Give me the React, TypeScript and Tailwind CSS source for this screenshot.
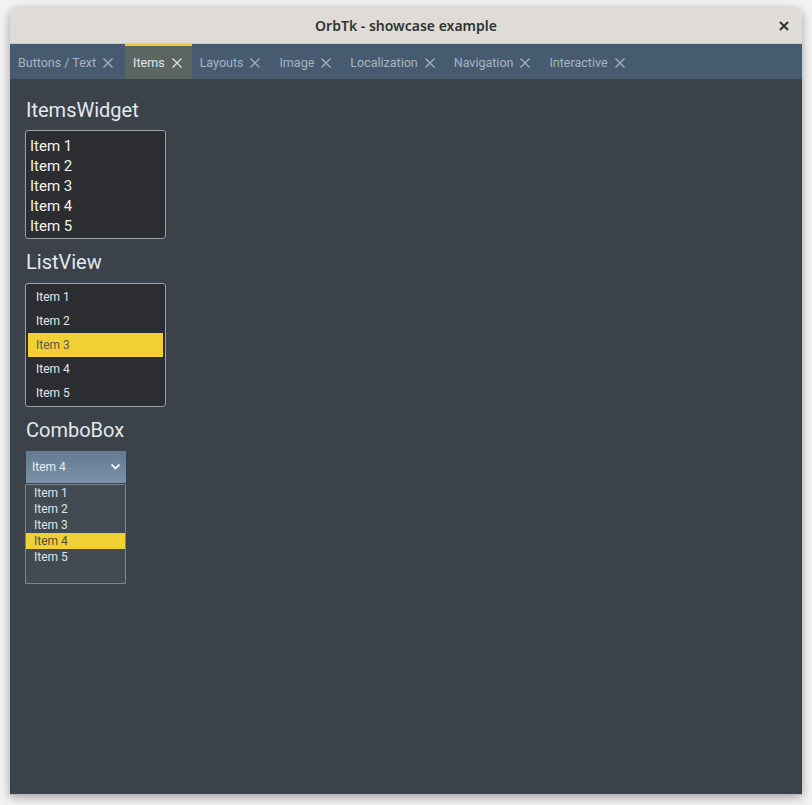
import React from "react";

const tabs = ["Buttons / Text", "Items", "Layouts", "Image", "Localization", "Navigation", "Interactive"];

function XIcon() {
  return (
    <svg width="10" height="10" viewBox="0 0 10 10">
      <path d="M0.5 0.5 L9.5 9.5 M9.5 0.5 L0.5 9.5" stroke="currentColor" strokeWidth="1.2" fill="none" />
    </svg>
  );
}

export default function App() {
  const items = ["Item 1", "Item 2", "Item 3", "Item 4", "Item 5"];
  return (
    <div
      className="w-[812px] h-[805px] bg-[#f2f2f2] pt-[8px] px-[10px] pb-[10px]"
      style={{ fontFamily: "Roboto, 'Noto Sans', sans-serif" }}
    >
      <div className="w-[792px] h-[787px] flex flex-col rounded-t-[8px] shadow-[0_2px_10px_rgba(0,0,0,0.35)] border-b border-[#b8b8b8]">
        {/* Title bar */}
        <div className="h-[36px] bg-[#dfdcd8] rounded-t-[8px] relative flex items-center justify-center border-b border-[#cbc7c2]">
          <span
            className="text-[14px] font-semibold text-[#2e3436]"
            style={{ fontFamily: "'Noto Sans', 'Open Sans', sans-serif" }}
          >
            OrbTk - showcase example
          </span>
          <span className="absolute right-[13px] top-[13px] text-[#2e3436]">
            <svg width="10" height="10" viewBox="0 0 10 10">
              <path d="M1 1 L9 9 M9 1 L1 9" stroke="currentColor" strokeWidth="2" fill="none" />
            </svg>
          </span>
        </div>
        {/* Tab bar */}
        <div className="h-[35px] bg-[#465b6f] flex">
          {tabs.map((t, idx) => {
            const active = t === "Items";
            return (
              <div
                key={t}
                className={
                  active
                    ? "h-full flex items-center pl-[8px] pr-[10px] gap-[7px] bg-[#5b6662] border-t-2 border-[#f0c92f] text-[#e1e6ea] text-[12.5px] pt-[1px]"
                    : idx === 0
                    ? "h-full flex items-center pl-[8px] pr-[12px] gap-[7px] text-[#a7b4c1] text-[12.5px] pt-[3px]"
                    : "h-full flex items-center pl-[8px] pr-[11px] gap-[7px] text-[#a7b4c1] text-[12.5px] pt-[3px]"
                }
              >
                <span>{t}</span>
                <XIcon />
              </div>
            );
          })}
        </div>
        {/* Content */}
        <div className="flex-1 bg-[#3b424a] pl-[15px] pt-[19px] flex flex-col items-start">
          <div className="ml-[1px] text-[20px] leading-[24px] text-[#e3e8ed]">ItemsWidget</div>
          <div className="mt-[8px] w-[141px] h-[109px] bg-[#2c2d30] border border-[#9aa2aa] rounded-[3px] pl-[4px] pt-[5px] flex flex-col">
            {items.map((i) => (
              <div key={i} className="text-[15px] leading-[20px] text-[#f2f4f6]">
                {i}
              </div>
            ))}
          </div>

          <div className="ml-[1px] mt-[11px] text-[20px] leading-[24px] text-[#e3e8ed]">ListView</div>
          <div className="mt-[9px] w-[141px] h-[124px] bg-[#2c2d30] border border-[#9aa2aa] rounded-[3px] px-[2px] pt-[1px] flex flex-col">
            {items.map((i) => (
              <div
                key={i}
                className={
                  i === "Item 3"
                    ? "h-[24px] flex items-center pl-[8px] text-[12px] bg-[#f0d034] text-[#5a5a4a]"
                    : "h-[24px] flex items-center pl-[8px] text-[12px] text-[#e2e6ea]"
                }
              >
                {i}
              </div>
            ))}
          </div>

          <div className="ml-[1px] mt-[11px] text-[20px] leading-[24px] text-[#e3e8ed]">ComboBox</div>
          <div className="mt-[9px] ml-[1px] w-[100px] h-[32px] bg-gradient-to-b from-[#637a90] to-[#7a92a7] flex items-center justify-between pl-[6px] pr-[5px] text-[12px] text-[#e7ecf0]">
            <span>Item 4</span>
            <svg width="11" height="8" viewBox="0 0 11 8">
              <path d="M1.5 1.5 L5.5 5.5 L9.5 1.5" stroke="#eef2f5" strokeWidth="1.8" fill="none" />
            </svg>
          </div>
          <div className="mt-[1px] w-[101px] h-[100px] bg-[#434b52] border border-[#7d868d] rounded-[1px] flex flex-col">
            {items.map((i) => (
              <div
                key={i}
                className={
                  i === "Item 4"
                    ? "h-[16px] flex items-center pl-[8px] text-[12px] bg-[#f0d034] text-[#4e4e44]"
                    : "h-[16px] flex items-center pl-[8px] text-[12px] text-[#dfe4e8]"
                }
              >
                {i}
              </div>
            ))}
          </div>
        </div>
      </div>
    </div>
  );
}
